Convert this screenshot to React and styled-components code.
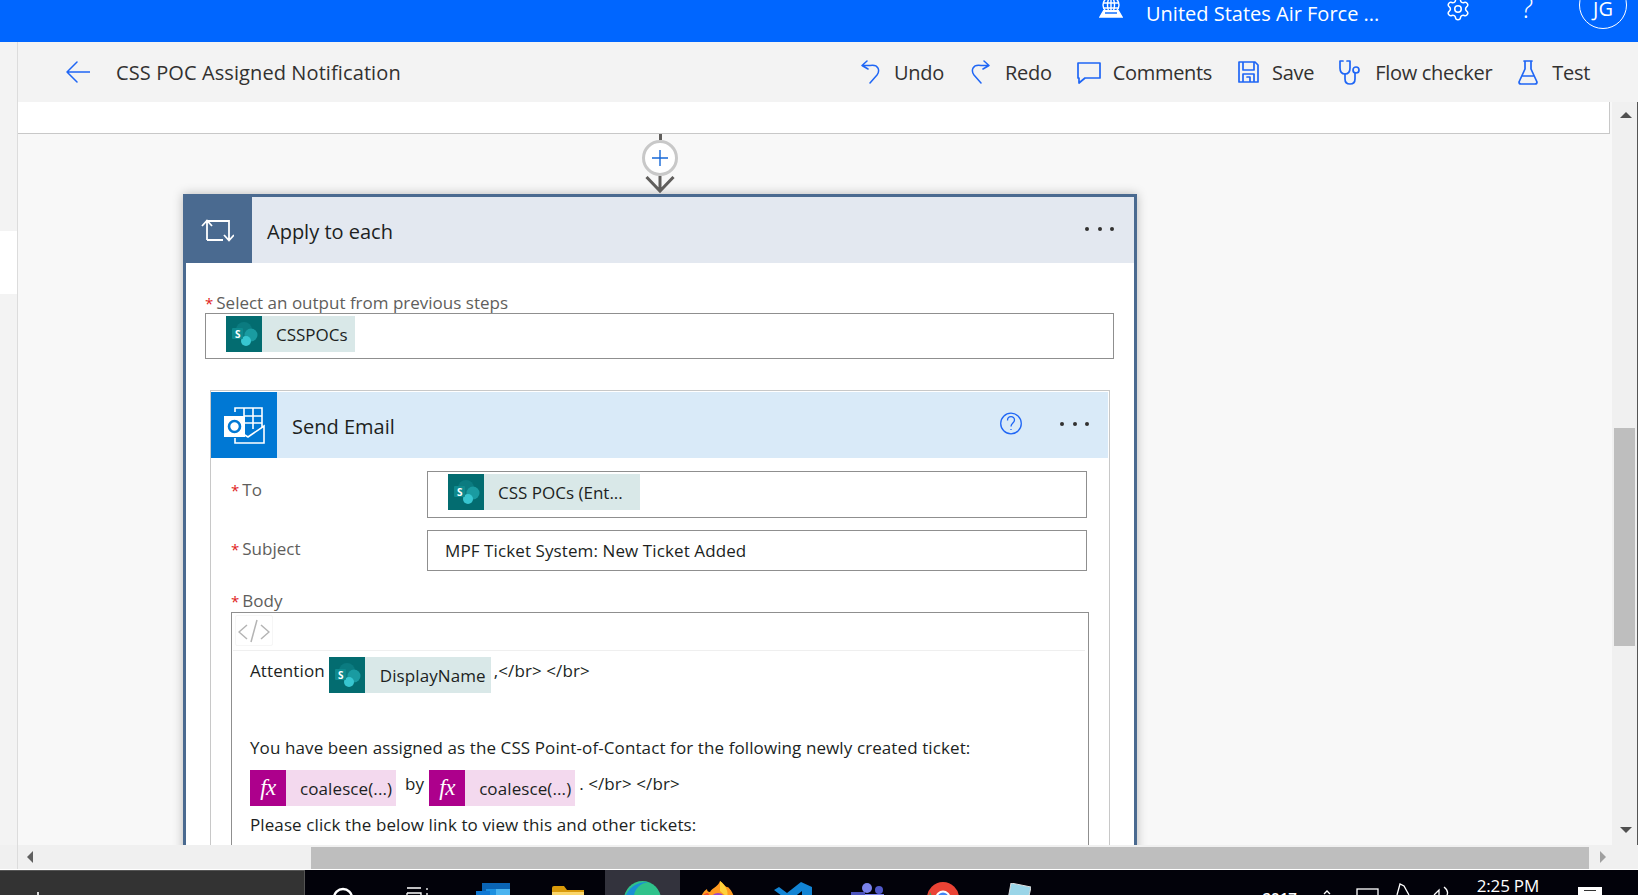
import React from 'react'
import styled, { createGlobalStyle } from 'styled-components'
import { Settings } from 'lucide-react'

const FONT = '"Open Sans", "Noto Sans", sans-serif'
const ACCENT = '#1f66f5'

const GlobalStyle = createGlobalStyle`
  html, body { margin: 0; padding: 0; height: 100%; overflow: hidden; }
  body { font-family: ${FONT}; color: #201f1e; background: #f8f8f8; }
  * { box-sizing: border-box; }
`

const Page = styled.div`
  display: flex;
  flex-direction: column;
  height: 100vh;
  overflow: hidden;
`

/* top blue bar */
const TopBar = styled.header`
  flex: 0 0 42px;
  height: 42px;
  background: #0066ff;
  color: #fff;
  overflow: hidden;
`
const TopRow = styled.div`
  height: 27px;
  display: flex;
  align-items: center;
  justify-content: flex-end;
`
const TenantName = styled.span`
  margin-left: 23px;
  width: 256px;
  font-size: 20px;
  white-space: nowrap;
`
const TopIcon = styled.span`
  display: flex;
  margin-top: -10px;
  margin-left: ${p => p.$left || 0}px;
`
const HelpMark = styled.span`
  width: 16px;
  margin-left: 50px;
  margin-top: -14px;
  font-size: 29px;
  font-weight: 300;
  line-height: 28px;
`
const Avatar = styled.span`
  width: 48px;
  height: 48px;
  margin-left: 42px;
  margin-right: 11px;
  margin-bottom: 18px;
  flex: none;
  display: flex;
  align-items: center;
  justify-content: center;
  border: 1px solid #fff;
  border-radius: 50%;
  font-size: 20px;
  padding-top: 8px;
`

/* middle */
const Middle = styled.div`
  flex: 1;
  min-height: 0;
  display: flex;
`
const Rail = styled.aside`
  flex: 0 0 18px;
  background: #f3f3f3;
  border-right: 1px solid #dcdcdc;
  padding-top: 189px;
`
const RailPatch = styled.div`
  height: 63px;
  background: #fff;
`
const Workspace = styled.div`
  flex: 1;
  min-width: 0;
  display: flex;
  flex-direction: column;
`
const CommandBar = styled.div`
  flex: 0 0 60px;
  display: flex;
  align-items: center;
  padding-left: 48px;
  padding-right: 48px;
  background: #f3f3f3;
`
const BackButton = styled.span`
  display: flex;
  margin-right: 26px;
`
const FlowTitle = styled.span`
  font-size: 20px;
  letter-spacing: 0.1px;
  color: #323130;
  white-space: nowrap;
  margin-right: auto;
`
const Command = styled.span`
  display: flex;
  align-items: center;
  gap: ${p => p.$gap || 14}px;
  margin-left: ${p => p.$left || 26}px;
  font-size: 20px;
  letter-spacing: -0.3px;
  color: #323130;
  white-space: nowrap;
`
const ScrollRow = styled.div`
  flex: 1;
  min-height: 0;
  display: flex;
`
const Canvas = styled.main`
  flex: 1;
  min-width: 0;
  overflow: hidden;
  background: #f8f8f8;
`
const PrevStepEdge = styled.div`
  height: 32px;
  margin-right: 2px;
  background: #fff;
  border-right: 1px solid #c8c8c8;
  border-bottom: 1px solid #c8c8c8;
`
const FlowColumn = styled.div`
  width: 954px;
  margin-left: 165px;
`
const Connector = styled.div`
  height: 60px;
  display: flex;
  flex-direction: column;
  align-items: center;
`
const ConnectorLine = styled.span`
  width: 3px;
  height: 6px;
  background: #605e5c;
`
const AddStep = styled.span`
  width: 36px;
  height: 36px;
  flex: none;
  display: flex;
  align-items: center;
  justify-content: center;
  background: #fff;
  border: 3px solid #c8c8c8;
  border-radius: 50%;
`

/* cards */
const LoopCard = styled.section`
  background: #fff;
  border: 3px solid #4a6a90;
  border-bottom: 0;
  box-shadow: 0 0 10px rgba(0, 0, 0, 0.25);
  padding-bottom: 40px;
`
const CardHeader = styled.div`
  display: flex;
  align-items: center;
  height: 66px;
  background: ${p => p.$bg};
`
const CardIcon = styled.div`
  flex: 0 0 ${p => p.$w}px;
  height: 100%;
  padding-right: ${p => p.$nudge || 0}px;
  display: flex;
  align-items: center;
  justify-content: center;
  background: ${p => p.$bg};
`
const CardTitle = styled.h3`
  margin: 2px 0 0 ${p => p.$left}px;
  flex: 1;
  font-size: 20px;
  font-weight: 400;
  color: #201f1e;
`
const HelpButton = styled.span`
  display: flex;
  margin-top: -3px;
`
const Dots = styled.span`
  display: flex;
  gap: 8.5px;
  margin-left: ${p => p.$left || 0}px;
  margin-right: ${p => p.$right}px;
  margin-top: -2px;
`
const Dot = styled.i`
  width: 4px;
  height: 4px;
  border-radius: 50%;
  background: #323130;
`
const LoopBody = styled.div`
  padding: 30px 20px 0 19px;
`
const FieldLabel = styled.label`
  display: block;
  height: 20px;
  margin-top: ${p => p.$top || 0}px;
  line-height: 20px;
  font-size: 17px;
  color: #605e5c;
  white-space: nowrap;
`
const Star = styled.span`
  color: #e02020;
  margin-right: 3px;
  font-size: 15px;
`
const TokenInput = styled.div`
  display: flex;
  align-items: ${p => (p.$plain ? 'center' : 'flex-start')};
  height: ${p => p.$h}px;
  flex: ${p => (p.$grow ? 1 : 'none')};
  padding-left: ${p => p.$pad || 20}px;
  padding-top: ${p => (p.$plain ? 0 : 2)}px;
  border: 1px solid #8f8f8f;
  font-size: 17px;
  letter-spacing: ${p => (p.$plain ? 0.1 : 0)}px;
  background: #fff;
  white-space: nowrap;
`
const Token = styled.span`
  flex: none;
  display: inline-flex;
  align-items: center;
  height: 36px;
  width: ${p => p.$w}px;
  background: ${p => p.$bg};
  font-size: 17px;
  color: #201f1e;
  white-space: nowrap;
`
const TokenIcon = styled.span`
  flex: 0 0 36px;
  height: 36px;
  display: flex;
  align-items: center;
  justify-content: center;
  margin-right: ${p => p.$gap}px;
  background: ${p => p.$bg};
  color: #fff;
  font-family: "Liberation Serif", serif;
  font-style: italic;
  font-size: 23px;
  letter-spacing: -0.5px;
`
const ActionCard = styled.section`
  margin: 31px 4px 0 5px;
  padding: 1px 1px 0 0;
  border: 1px solid #c8c8c8;
  border-bottom: 0;
`
const ActionBody = styled.div`
  padding: 13px 0 0 20px;
`
const Row = styled.div`
  display: flex;
  margin-bottom: 12px;
  padding-right: 21px;
`
const RowLabel = styled(FieldLabel)`
  flex: 0 0 196px;
  margin-top: 9px;
`
const BodyBox = styled.div`
  margin-top: 1px;
  margin-right: 19px;
  border: 1px solid #8f8f8f;
  border-bottom: 0;
  padding-top: 2px;
`
const CodeBar = styled.div`
  height: 36px;
  padding: 0 2px;
  margin: 0 3px 0 1px;
  border-bottom: 1px solid #efefef;
`
const CodeButton = styled.span`
  display: flex;
  align-items: center;
  justify-content: center;
  width: 38px;
  height: 31px;
  border: 1px solid #f6f6f6;
  border-radius: 2px;
`
const BodyText = styled.div`
  padding: 0 0 60px 18px;
  font-size: 17px;
  letter-spacing: 0.1px;
  color: #201f1e;
`
const TokenLine = styled.div`
  display: flex;
  align-items: flex-start;
  height: 36px;
  margin-top: ${p => p.$top}px;
  white-space: nowrap;
`
const InlineText = styled.span`
  margin: ${p => p.$m || '2px 0 0 0'};
  line-height: 24px;
`
const TextLine = styled.div`
  height: 22px;
  line-height: 22px;
  margin-top: ${p => p.$top}px;
  white-space: nowrap;
`

/* scrollbars */
const VScroll = styled.div`
  flex: 0 0 26px;
  display: flex;
  flex-direction: column;
  align-items: center;
  padding-top: 10px;
  background: #f0f0f0;
  border-right: 1px solid #555;
`
const Triangle = styled.span`
  flex: none;
  width: 0;
  height: 0;
  border-style: solid;
  border-color: transparent;
  ${p => p.$dir === 'up' && 'border-width: 0 6px 6px; border-bottom-color: #505050; margin-left: 2px;'}
  ${p => p.$dir === 'down' && 'border-width: 6px 6px 0; border-top-color: #505050; margin-left: 2px;'}
  ${p => p.$dir === 'left' && 'border-width: 6px 6px 6px 0; border-right-color: #606060;'}
  ${p => p.$dir === 'right' && 'border-width: 6px 0 6px 6px; border-left-color: #a0a0a0;'}
`
const VThumb = styled.div`
  width: 21px;
  height: 218px;
  margin: 310px 0 181px;
  background: #bebebe;
`
const HScroll = styled.div`
  flex: 0 0 24px;
  display: flex;
  align-items: center;
  background: #f0f0f0;
  padding-left: 27px;
  position: relative;
`
const HGutterLine = styled.span`
  position: absolute;
  left: 17px;
  top: 0;
  bottom: 0;
  width: 1px;
  background: #dcdcdc;
`
const HThumb = styled.div`
  width: 1278px;
  height: 22px;
  margin: 1px 11px 0 278px;
  background: #bebebe;
`

/* taskbar */
const Taskbar = styled.footer`
  flex: 0 0 26px;
  display: flex;
  overflow: hidden;
  background: #02020a;
  border-top: 1px solid #fff;
`
const SearchBox = styled.div`
  flex: 0 0 305px;
  padding-left: 37px;
  background: #333;
  border-top: 1px solid #555;
  border-right: 1px solid #555;
`
const SearchTick = styled.span`
  display: block;
  width: 2px;
  height: 3px;
  margin-top: 21px;
  background: #ddd;
`
const TaskSlot = styled.div`
  flex: 0 0 75px;
  display: flex;
  justify-content: center;
  padding-top: ${p => p.$top}px;
  background: ${p => (p.$active ? '#33333d' : 'transparent')};
`
const Tray = styled.div`
  flex: 1;
  display: flex;
  justify-content: flex-end;
  gap: 25px;
  padding-right: 36px;
  color: #fff;
`
const TrayYear = styled.span`
  font-size: 15px;
  line-height: 20px;
  margin-top: 17px;
  font-weight: 600;
`
const Clock = styled.span`
  font-size: 17px;
  line-height: 24px;
  letter-spacing: -0.2px;
  margin-top: 4px;
  white-space: nowrap;
`
const NotifyBox = styled.span`
  width: 24px;
  height: 10px;
  margin: 17px 0 0 14px;
  background: #fff;
  padding: 3px 6px 0;
`
const NotifyBar = styled.span`
  display: block;
  height: 1px;
  background: #333;
`

const stroke = { fill: 'none', stroke: ACCENT, strokeWidth: 1.5, strokeLinecap: 'round', strokeLinejoin: 'round' }

const BackIcon = () => (
  <svg width="24" height="22" viewBox="0 0 24 22" {...stroke}>
    <path d="M11 1 L1 11 L11 21 M1 11 H24" />
  </svg>
)
// the reference's undo is a narrow hook, arrow head on top and tail going down
const UndoIcon = ({ flip }) => (
  <svg width="20" height="24" viewBox="0 0 20 24" {...stroke} style={flip ? { transform: 'scaleX(-1)' } : undefined}>
    <path d="M7 1 L2 5.5 L8 9 M2 5.5 H10 C19 4 20 11 17 15 L10 23" />
  </svg>
)
const CommentIcon = () => (
  <svg width="24" height="23" viewBox="0 0 24 23" {...stroke} strokeWidth="1.7">
    <path d="M1 2 H23 V17 H8 L2 22 V17 H1 Z" />
  </svg>
)
const SaveIcon = () => (
  <svg width="21" height="22" viewBox="0 0 21 22" {...stroke} strokeWidth="1.7">
    <path d="M1 1 H17 L20 4 V21 H1 Z M5 1 V9 H16 V1 M5 21 V13 H16 V21 M9 16 H12 V21" />
  </svg>
)
const StethoscopeIcon = () => (
  <svg width="24" height="25" viewBox="0 0 24 25" {...stroke} strokeWidth="1.7">
    <path d="M5 1 H2 V8 C2 13 5 14 7 14 C9 14 12 13 12 8 V1 H9" />
    <path d="M7 14 V19 C7 22 9 24 12 24 C16 24 17 21 17 19 V13" />
    <circle cx="18" cy="10" r="3" />
  </svg>
)
const FlaskIcon = () => (
  <svg width="20" height="25" viewBox="0 0 20 25" {...stroke} strokeWidth="1.7">
    <path d="M6 1 H14 M7 1 V9 L1 22 C1 23 2 24 3 24 H17 C18 24 19 23 19 22 L13 9 V1 M4 16 H16" />
  </svg>
)
const GlobeIcon = () => (
  <svg width="24" height="18" viewBox="0 0 24 18" fill="none" stroke="#fff" strokeWidth="1.4">
    <circle cx="12" cy="5" r="8" />
    <ellipse cx="12" cy="5" rx="3.5" ry="8" />
    <path d="M4 3 H20 M4 8 H20 M12 -3 V13" />
    <path d="M5 10 L1 17 H23 L19 10" fill="#fff" />
    <path d="M6 13 H18" stroke="#0066ff" />
  </svg>
)
const PlusIcon = () => (
  <svg width="16" height="16" viewBox="0 0 16 16" fill="none" stroke="#1668d8" strokeWidth="1.4">
    <path d="M8 0 V16 M0 8 H16" />
  </svg>
)
const ArrowHead = () => (
  <svg width="30" height="18" viewBox="0 0 30 18" fill="none" stroke="#605e5c" strokeWidth="3">
    <path d="M1.5 1 L15 15 L28.5 1 M15 0 V15" />
  </svg>
)
const LoopIcon = () => (
  <svg width="33" height="23" viewBox="0 0 33 23" fill="none" stroke="#fff" strokeWidth="1.8">
    <path d="M6 21 V2 H28 V21 M1 7 L6 1.5 L11 7 M23 16 L28 21.5 L33 16 M6 21 H22" />
  </svg>
)
const OutlookIcon = () => (
  <svg width="41" height="37" viewBox="0 0 41 37">
    <g fill="none" stroke="#fff" strokeWidth="1.6">
      <path d="M11 5 V1 H38 V20 M11 31 V36 H40 V19 L24 30 L14 24" />
      <path d="M20 1 V19 M29 1 V22 M20 9 H38 M20 16 H38" />
    </g>
    <rect x="0" y="9" width="21" height="21" fill="#fff" />
    <circle cx="10.5" cy="19.5" r="5.5" fill="none" stroke="#0078d4" strokeWidth="2.6" />
  </svg>
)
const SharePointIcon = () => (
  <svg width="36" height="36" viewBox="0 0 36 36">
    <circle cx="18" cy="14" r="8" fill="#0b7b80" />
    <circle cx="25" cy="19" r="6.5" fill="#1a9ba1" />
    <circle cx="20" cy="25" r="5" fill="#37c6d0" />
    <rect x="6" y="12" width="11" height="11" rx="1" fill="#0e8a8e" />
    <text x="11.5" y="21.5" textAnchor="middle" fill="#fff" fontSize="10" fontWeight="700" fontStyle="normal" fontFamily="Open Sans">S</text>
  </svg>
)
const HelpIcon = () => (
  <svg width="22" height="23" viewBox="0 0 22 23" fill="none" stroke={ACCENT} strokeWidth="1.3">
    <circle cx="11" cy="11.5" r="10.3" />
    <path d="M7.5 8.5 C7.5 3.5 14.5 3.5 14.5 8 C14.5 11 11 11 11 14.5 M11 17 V18" />
  </svg>
)
const CodeIcon = () => (
  <svg width="32" height="24" viewBox="0 0 32 24" fill="none" stroke="#b4b4b4" strokeWidth="1.5">
    <path d="M9 6 L1 13 L9 20 M23 6 L31 13 L23 20 M19 1 L13 23" />
  </svg>
)

const SearchGlyph = () => (
  <svg width="22" height="22" viewBox="0 0 22 22" fill="none" stroke="#fff" strokeWidth="2.4"><circle cx="11" cy="11" r="9" /></svg>
)
const TaskViewGlyph = () => (
  <svg width="24" height="12" viewBox="0 0 24 12" fill="none" stroke="#fff" strokeWidth="1.3"><path d="M1 1 H15 M1 6 H15 V12 M1 6 V12 M21 1 V3 M21 6 V9" /></svg>
)
const OutlookGlyph = () => (
  <svg width="34" height="22" viewBox="0 0 34 22">
    <rect x="6" width="28" height="22" fill="#0a64b4" />
    <rect x="20" y="6" width="14" height="8" fill="#4ab4f0" />
    <rect x="10" y="6" width="10" height="8" fill="#1c90e0" />
    <rect y="8" width="14" height="14" fill="#0f78d4" />
  </svg>
)
const FolderGlyph = () => (
  <svg width="32" height="20" viewBox="0 0 32 20">
    <path d="M0 2 Q0 0 2 0 H12 L15 4 H32 V20 H0 Z" fill="#d99a0a" />
    <rect y="6" width="32" height="14" fill="#fbd66a" />
  </svg>
)
const EdgeGlyph = () => (
  <svg width="37" height="24" viewBox="0 0 37 24">
    <circle cx="18.5" cy="18.5" r="18.5" fill="#2fc28b" />
    <path d="M0 20 C3 5 16 0 24 1 C14 3 8 10 10 24 H0 Z" fill="#1a8fd4" />
    <circle cx="19" cy="22" r="8" fill="#0d5fae" />
  </svg>
)
const FirefoxGlyph = () => (
  <svg width="39" height="24" viewBox="0 0 39 24">
    <path d="M2 24 C2 14 6 10 9 8 C9 10 10 11 12 11 C15 6 20 6 22 0 C26 3 28 7 30 6 C34 10 37 15 37 24 Z" fill="#ff9a1f" />
    <path d="M2 24 C2 16 6 12 10 12 L18 24 Z" fill="#f2502c" />
    <circle cx="20" cy="20" r="8" fill="#9a45c8" />
    <path d="M22 0 C27 4 31 10 29 16 L22 10 Z" fill="#ffd23a" />
  </svg>
)
const VSCodeGlyph = () => (
  <svg width="38" height="24" viewBox="0 0 38 24">
    <path d="M27 0 L38 5 V24 H28 V9 L14 20 L8 24 H5 L0 20 L8 14 L0 8 L5 5 L13 11 Z" fill="#1284d4" />
  </svg>
)
const TeamsGlyph = () => (
  <svg width="33" height="22" viewBox="0 0 33 22">
    <circle cx="16" cy="5" r="5" fill="#7b83eb" />
    <circle cx="28" cy="7" r="4" fill="#5059c9" />
    <rect y="9" width="14" height="13" fill="#4b53bc" />
    <rect x="14" y="11" width="19" height="11" fill="#7b83eb" />
  </svg>
)
const ChromeGlyph = () => (
  <svg width="32" height="23" viewBox="0 0 32 23">
    <circle cx="16" cy="16" r="16" fill="#ea4335" />
    <path d="M2 23 L5 15 H32 V23 Z" fill="#fbbc05" />
    <path d="M0 23 L3 10 L9 23 Z" fill="#34a853" />
    <circle cx="16" cy="16" r="7.5" fill="#fff" />
    <circle cx="16" cy="16" r="5.5" fill="#4285f4" />
  </svg>
)
const NotepadGlyph = () => (
  <svg width="26" height="22" viewBox="0 0 26 22">
    <path d="M6 0 L26 4 L22 22 H2 Z" fill="#9ad5e8" stroke="#ddd" />
  </svg>
)
const TrayGlyphs = () => (
  <svg width="130" height="25" viewBox="0 0 130 25" fill="none" stroke="#fff" strokeWidth="1.3">
    <path d="M2 24 L5 21 L8 24" />
    <rect x="35" y="19" width="21" height="12" />
    <path d="M75 25 L78 14 L82 16 L87 25" />
    <path d="M112 25 L117 20 V25 M122 17 Q127 21 125 25" />
  </svg>
)

const SharePointToken = ({ w, gap, children }) => (
  <Token $w={w} $bg="#d9e8e8">
    <TokenIcon $bg="#036c70" $gap={gap}><SharePointIcon /></TokenIcon>
    {children}
  </Token>
)
const ExprToken = ({ children }) => (
  <Token $w={146} $bg="#f3d9ee">
    <TokenIcon $bg="#ad008c" $gap={14}>fx</TokenIcon>
    {children}
  </Token>
)

const commands = [
  { label: 'Undo', icon: <UndoIcon />, left: 0 },
  { label: 'Redo', icon: <UndoIcon flip />, left: 27 },
  { label: 'Comments', icon: <CommentIcon />, left: 25, gap: 12 },
  { label: 'Save', icon: <SaveIcon />, left: 26, gap: 13 },
  { label: 'Flow checker', icon: <StethoscopeIcon />, left: 24, gap: 13 },
  { label: 'Test', icon: <FlaskIcon />, left: 26, gap: 14 },
]

const App = () => {
  return (
    <Page>
      <GlobalStyle />
      <TopBar>
        <TopRow>
          <TopIcon><GlobeIcon /></TopIcon>
          <TenantName>United States Air Force ...</TenantName>
          <TopIcon $left={43}><Settings size={26} color="#fff" strokeWidth={1.4} /></TopIcon>
          <HelpMark>?</HelpMark>
          <Avatar>JG</Avatar>
        </TopRow>
      </TopBar>

      <Middle>
        <Rail><RailPatch /></Rail>
        <Workspace>
          <CommandBar>
            <BackButton><BackIcon /></BackButton>
            <FlowTitle>CSS POC Assigned Notification</FlowTitle>
            {commands.map(c => (
              <Command key={c.label} $left={c.left} $gap={c.gap}>
                {c.icon}
                {c.label}
              </Command>
            ))}
          </CommandBar>

          <ScrollRow>
            <Canvas>
              <PrevStepEdge />
              <FlowColumn>
                <Connector>
                  <ConnectorLine />
                  <AddStep><PlusIcon /></AddStep>
                  <ArrowHead />
                </Connector>

                <LoopCard>
                  <CardHeader $bg="#e3e8f0">
                    <CardIcon $w={66} $bg="#4a6a90" $nudge={4}><LoopIcon /></CardIcon>
                    <CardTitle $left={15}>Apply to each</CardTitle>
                    <Dots $right={20}><Dot /><Dot /><Dot /></Dots>
                  </CardHeader>

                  <LoopBody>
                    <FieldLabel><Star>*</Star>Select an output from previous steps</FieldLabel>
                    <TokenInput $h={46}>
                      <SharePointToken w={129} gap={14}>CSSPOCs</SharePointToken>
                    </TokenInput>

                    <ActionCard>
                      <CardHeader $bg="#d9eaf8">
                        <CardIcon $w={66} $bg="#0078d4"><OutlookIcon /></CardIcon>
                        <CardTitle $left={15}>Send Email</CardTitle>
                        <HelpButton><HelpIcon /></HelpButton>
                        <Dots $left={38} $right={19}><Dot /><Dot /><Dot /></Dots>
                      </CardHeader>

                      <ActionBody>
                        <Row>
                          <RowLabel><Star>*</Star>To</RowLabel>
                          <TokenInput $h={47} $grow>
                            <SharePointToken w={192} gap={14}>CSS POCs (Ent...</SharePointToken>
                          </TokenInput>
                        </Row>
                        <Row>
                          <RowLabel><Star>*</Star>Subject</RowLabel>
                          <TokenInput $h={41} $grow $pad={17} $plain>MPF Ticket System: New Ticket Added</TokenInput>
                        </Row>

                        <FieldLabel $top={20}><Star>*</Star>Body</FieldLabel>
                        <BodyBox>
                          <CodeBar><CodeButton><CodeIcon /></CodeButton></CodeBar>
                          <BodyText>
                            <TokenLine $top={6}>
                              <InlineText $m="2px 4px 0 0">Attention</InlineText>
                              <SharePointToken w={162} gap={15}>DisplayName</SharePointToken>
                              <InlineText $m="2px 0 0 3px">,&lt;/br&gt; &lt;/br&gt;</InlineText>
                            </TokenLine>
                            <TextLine $top={44}>You have been assigned as the CSS Point-of-Contact for the following newly created ticket:</TextLine>
                            <TokenLine $top={11}>
                              <ExprToken>coalesce(...)</ExprToken>
                              <InlineText $m="2px 5px 0 9px">by</InlineText>
                              <ExprToken>coalesce(...)</ExprToken>
                              <InlineText $m="2px 0 0 4px">. &lt;/br&gt; &lt;/br&gt;</InlineText>
                            </TokenLine>
                            <TextLine $top={8}>Please click the below link to view this and other tickets:</TextLine>
                          </BodyText>
                        </BodyBox>
                      </ActionBody>
                    </ActionCard>
                  </LoopBody>
                </LoopCard>
              </FlowColumn>
            </Canvas>
            <VScroll>
              <Triangle $dir="up" />
              <VThumb />
              <Triangle $dir="down" />
            </VScroll>
          </ScrollRow>
        </Workspace>
      </Middle>

      <HScroll>
        <HGutterLine />
        <Triangle $dir="left" />
        <HThumb />
        <Triangle $dir="right" />
      </HScroll>

      <Taskbar>
        <SearchBox><SearchTick /></SearchBox>
        <TaskSlot $top={17}><SearchGlyph /></TaskSlot>
        <TaskSlot $top={17}><TaskViewGlyph /></TaskSlot>
        <TaskSlot $top={13}><OutlookGlyph /></TaskSlot>
        <TaskSlot $top={16}><FolderGlyph /></TaskSlot>
        <TaskSlot $top={11} $active><EdgeGlyph /></TaskSlot>
        <TaskSlot $top={11}><FirefoxGlyph /></TaskSlot>
        <TaskSlot $top={12}><VSCodeGlyph /></TaskSlot>
        <TaskSlot $top={13}><TeamsGlyph /></TaskSlot>
        <TaskSlot $top={12}><ChromeGlyph /></TaskSlot>
        <TaskSlot $top={13}><NotepadGlyph /></TaskSlot>
        <Tray>
          <TrayYear>2017</TrayYear>
          <TrayGlyphs />
          <Clock>2:25 PM</Clock>
          <NotifyBox><NotifyBar /></NotifyBox>
        </Tray>
      </Taskbar>
    </Page>
  )
}

export default App
